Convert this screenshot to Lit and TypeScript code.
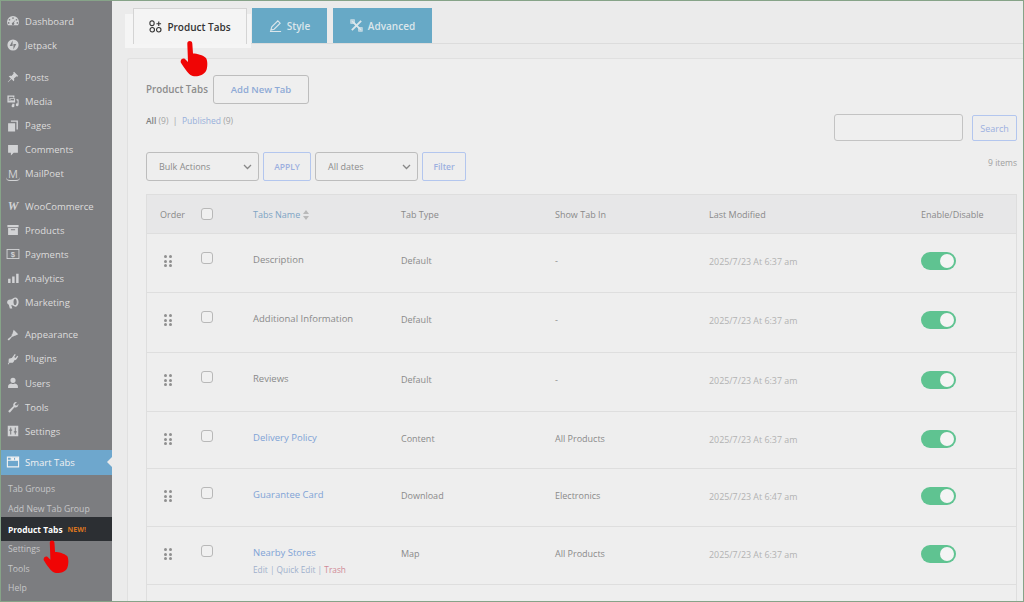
import { css, html, LitElement, svg } from "lit";
import { customElement } from "lit/decorators.js";

// dashicon-like shapes, all on a 20x20 box
const icons: Record<string, unknown> = {
  dashboard: svg`<path d="M10 3a8.500 8.500 0 0 0-8.500 8.500c0 1.700.5 3.200 1.300 4.500h14.400c.8-1.300 1.300-2.800 1.300-4.500A8.500 8.500 0 0 0 10 3zm0 1.600a1.200 1.200 0 1 1 0 2.400 1.200 1.200 0 0 1 0-2.400zM5 7a1.200 1.200 0 1 1 0 2.400A1.200 1.200 0 0 1 5 7zm10 0a1.200 1.200 0 1 1 0 2.400A1.200 1.200 0 0 1 15 7zm-1.500 1.200-2.200 4.300a1.800 1.800 0 1 1-1.500-.4zM3.800 11.500a1.200 1.200 0 1 1 0 2.400 1.200 1.200 0 0 1 0-2.400zm12.400 0a1.200 1.200 0 1 1 0 2.400 1.200 1.200 0 0 1 0-2.400z" fill-rule="evenodd"/>`,
  jetpack: svg`<path d="M10 2a8 8 0 1 0 0 16 8 8 0 0 0 0-16zM9.400 11.300H5.300l4.100-7.900zm1.200 5.300V8.700h4.100z" fill-rule="evenodd"/>`,
  posts: svg`<path d="M11.500 2.500 17.500 8.500 16 9.800 15 9l-3.600 3.200c.6 1.500.4 3-.4 4L7.800 13 3 17.500 2.500 17 7 12.200 3.800 9c1-.8 2.500-1 4-.4L11 5 10.200 4z"/>`,
  media: svg`<path d="M2 2h10v3h-2V4H4v6h1v2H2zm3 4h8v6H5zm1.500 1v3l2-1.500 1.500 1 1.500-1V7zM15 7l3 1v7.500a2 2 0 1 1-1.500-2V9.500L15 9zM9 14h3v3a2 2 0 1 1-1.500-1.900V15H9z" fill-rule="evenodd"/>`,
  pages: svg`<path d="M7 2h10v13h-2V4H7zM3 6h10v12H3z"/>`,
  comments: svg`<path d="M3 3h14v11h-6l-4 4v-4H3z"/>`,
  products: svg`<path d="M2 3h16v3H2zm1 4h14v10H3zm4 2v1.500h6V9z" fill-rule="evenodd"/>`,
  analytics: svg`<path d="M3 11h3.500v6H3zm5.800-3h3.500v9H8.800zm5.700-4H18v13h-3.500z"/>`,
  marketing: svg`<path d="M18 8.500c0-3.500-2-6.500-5-6.500-1 0-4 3-9 3.500a4 4 0 0 0-2.500 3.500A3.800 3.800 0 0 0 4 12.500L5.500 18H9l-1.500-5.200c2 .3 4 1.700 5.500 2.700 3 0 5-3.500 5-7zm-5 4.500c-1.300 0-2.300-2-2.300-4.500S11.700 4 13 4s2.300 2 2.300 4.500S14.300 13 13 13z" fill-rule="evenodd"/>`,
  appearance: svg`<path d="M11 2.500 17.500 9 13 11l-2 .5-1 1.500-1-1-4.500 5.500c-.8.6-2.500-.8-1.900-1.900L8.500 11l-1-1L9 9l.5-2z"/>`,
  plugins: svg`<path d="M12.500 3 14 4l-2.300 3.300 2 1.400L16 5.500l1.500 1-2.500 3.700c-.8 1.200-2 1.800-3.200 1.500-.4 1.300-1 2.800-2.300 3.800H5c-.5 1-1 2-1.500 2.500L2.500 17 4 14.500c-.7-1.700 0-3 0-5l4-1 .3.100z"/>`,
  users: svg`<path d="M10 2.500a3.700 3.700 0 1 1 0 7.400 3.700 3.700 0 0 1 0-7.400zM3 17v-2.500C3 12 6 10.800 7.500 10.800c1.500 1 3.500 1 5 0 1.500 0 4.500 1.200 4.500 3.700V17z"/>`,
  tools: svg`<path d="M17.500 5.500c.5 2-.2 3.600-1.500 4.600-1.200.8-2.600.9-3.900.4L6 17.500c-1 1-3.300-1-2.300-2.300l6.900-6.600c-.5-1.300-.4-2.800.5-4 1-1.400 2.700-2 4.400-1.500L12.500 6l1.300 1.900 2.300.1z"/>`,
  settings: svg`<path d="M2.500 2.500h15v15h-15zM6 5v3H4.700v1.600H6V15h1.500V9.600h1.300V8H7.500V5zm6.500 0v5.400h-1.300V12h1.300v3H14v-3h1.300v-1.600H14V5z" fill-rule="evenodd"/>`,
};

const outlineIcons: Record<string, unknown> = {
  payments: svg`<rect x="1.500" y="3.500" width="17" height="13" fill="none" stroke="currentColor" stroke-width="1.300"/><text x="10" y="14.500" font-size="11" font-weight="700" text-anchor="middle" fill="currentColor" font-family="Liberation Sans, sans-serif">$</text>`,
  smart: svg`<path d="M2 3h16v14H2zM2 7.500h16M7.500 3v4.500" fill="none" stroke="currentColor" stroke-width="1.600"/><path d="M8 3.500h3.500v4H8zm5 0h4.500v4H13z"/>`,
};

type Item = { label: string; icon: string; gap?: boolean };
const menu: Item[] = [
  { label: "Dashboard", icon: "dashboard" },
  { label: "Jetpack", icon: "jetpack" },
  { label: "Posts", icon: "posts", gap: true },
  { label: "Media", icon: "media" },
  { label: "Pages", icon: "pages" },
  { label: "Comments", icon: "comments" },
  { label: "MailPoet", icon: "mailpoet" },
  { label: "WooCommerce", icon: "woo", gap: true },
  { label: "Products", icon: "products" },
  { label: "Payments", icon: "payments" },
  { label: "Analytics", icon: "analytics" },
  { label: "Marketing", icon: "marketing" },
  { label: "Appearance", icon: "appearance", gap: true },
  { label: "Plugins", icon: "plugins" },
  { label: "Users", icon: "users" },
  { label: "Tools", icon: "tools" },
  { label: "Settings", icon: "settings" },
];

type Row = { name: string; type: string; show: string; date: string; h: number; link?: boolean; actions?: boolean };
const rows: Row[] = [
  { name: "Description", type: "Default", show: "-", date: "2025/7/23 At 6:37 am", h: 59 },
  { name: "Additional Information", type: "Default", show: "-", date: "2025/7/23 At 6:37 am", h: 60 },
  { name: "Reviews", type: "Default", show: "-", date: "2025/7/23 At 6:37 am", h: 59 },
  { name: "Delivery Policy", type: "Content", show: "All Products", date: "2025/7/23 At 6:37 am", h: 57, link: true },
  { name: "Guarantee Card", type: "Download", show: "Electronics", date: "2025/7/23 At 6:47 am", h: 58, link: true },
  { name: "Nearby Stores", type: "Map", show: "All Products", date: "2025/7/23 At 6:37 am", h: 58, link: true, actions: true },
];

const hand = (cls: string) => html`<svg class="hand ${cls}" viewBox="0 0 28 36">
  <path fill="#f00505" d="M7.300 2.500C7.500-.7 12-.7 12.300 2.500L13 12.500C17 12.500 23 14 26 17 28 20 27.500 27 26 30 23 35.500 14 36.500 10.500 34 7.500 31.500 3.500 26 .8 21.500 0 18.500 3 16.500 5 18L8 21z"/>
</svg>`;

@customElement("app-root")
export class AppRoot extends LitElement {
  static styles = css`
    :host {
      display: block;
      position: relative;
      box-sizing: border-box;
      width: 1024px;
      height: 602px;
      overflow: hidden;
      border: 1px solid #86a388;
      background: #ebebeb;
      font-family: "Open Sans", "Liberation Sans", sans-serif;
      font-size: 9.5px;
      color: #868686;
    }
    .page {
      display: flex;
      height: 100%;
    }
    .side {
      flex: none;
      width: 111px;
      background: #7c7d80;
      color: #dcdcdc;
      padding-top: 8px;
      font-size: 9.5px;
    }
    .item {
      display: flex;
      align-items: center;
      gap: 5px;
      height: 24.15px;
      padding-left: 5px;
    }
    .item.gap {
      margin-top: 8px;
    }
    .ico {
      flex: none;
      width: 14px;
      height: 14px;
      fill: #d2d3d5;
      color: #d2d3d5;
    }
    .glyph {
      flex: none;
      width: 14px;
      text-align: center;
      color: #d2d3d5;
      line-height: 13px;
    }
    .glyph.woo {
      font: italic 700 12px "Liberation Serif", serif;
    }
    .glyph.mp {
      font-size: 11px;
      border-bottom: 1px solid #d2d3d5;
      border-radius: 0 0 4px 4px;
      height: 13px;
    }
    .item.active {
      position: relative;
      margin-top: 7px;
      margin-bottom: 3px;
      background: #6ea7cd;
      color: #f2f2f2;
    }
    .item.active .ico {
      fill: #f2f2f2;
      color: #f2f2f2;
    }
    .item.active::after {
      content: "";
      position: absolute;
      right: 0;
      top: 7px;
      border: 5px solid transparent;
      border-right-color: #ebebeb;
      border-left-width: 0;
    }
    .sub {
      box-sizing: border-box;
      display: flex;
      align-items: center;
      gap: 5px;
      height: 19.9px;
      padding-left: 7px;
      font-size: 8.7px;
      color: #c6c6c8;
    }
    .sub.before {
      padding-top: 4px;
    }
    .sub.after {
      height: 19.6px;
      padding-bottom: 4px;
    }
    .sub.current {
      height: 24px;
      background: #2c2f33;
      color: #fff;
      font-size: 8.4px;
      font-weight: 700;
    }
    .new {
      font-size: 7px;
      color: #d9741f;
    }
    .main {
      flex: 1;
      min-width: 0;
      padding: 7px 0 0 15px;
    }
    .tabs {
      position: relative;
      display: flex;
      gap: 6px;
      height: 35px;
      padding-left: 6px;
      border-bottom: 1px solid #dcdcdc;
      font-size: 10px;
      font-weight: 600;
    }
    .tab {
      display: flex;
      align-items: center;
      justify-content: center;
      gap: 5px;
      background: #67a9c6;
      color: #dbe6eb;
    }
    .tab svg {
      width: 13px;
      height: 13px;
      fill: none;
      stroke: currentColor;
      stroke-width: 1.200;
    }
    .tab.on {
      position: relative;
      z-index: 1;
      width: 114px;
      height: 36px;
      margin-right: -1px;
      box-sizing: border-box;
      background: #f4f4f4;
      color: #333;
      border: 1px solid #d4d4d4;
      border-bottom: none;
      box-shadow: -9px 5px 0 -1px #f5f5f5, 5px 5px 0 -1px #f5f5f5;
    }
    .tab.style {
      width: 75px;
    }
    .tab.adv {
      width: 99px;
    }
    .card {
      box-sizing: border-box;
      margin: 14px 0 0 0;
      padding: 16px 6px 0 18px;
      height: 560px;
      background: #eeeeee;
      border: 1px solid #e0e0e0;
      border-right: none;
      border-radius: 3px 0 0 0;
    }
    .head {
      display: flex;
      align-items: center;
      gap: 5px;
      font-size: 9.800px;
      font-weight: 600;
      color: #8c8c8c;
    }
    .head button {
      width: 96px;
      height: 29px;
      font-size: 9.500px;
      font-weight: 600;
      color: #8eaad6;
      background: #efefef;
      border: 1px solid #bdbdbd;
      border-radius: 3px;
      font-family: inherit;
    }
    .filters-top {
      display: flex;
      justify-content: space-between;
      height: 34px;
      margin-top: 11px;
      font-size: 8.500px;
      color: #a3a3a3;
    }
    .counts b {
      font-weight: 600;
      color: #7e7e7e;
    }
    .counts a {
      color: #97aedb;
    }
    .search {
      display: flex;
      gap: 9px;
      margin-top: -1px;
    }
    .search i {
      display: block;
      box-sizing: border-box;
      width: 129px;
      height: 27px;
      border: 1px solid #c3c3c3;
      border-radius: 3px;
      background: #efefef;
    }
    .ghost {
      box-sizing: border-box;
      display: flex;
      align-items: center;
      justify-content: center;
      height: 26px;
      border: 1px solid #b3c6ee;
      border-radius: 2px;
      font-size: 8.500px;
      font-weight: 600;
      color: #9cb0e0;
    }
    .search .ghost {
      width: 45px;
      margin-top: 1px;
      font-size: 9px;
      font-weight: 400;
    }
    .bulk {
      display: flex;
      align-items: flex-start;
      gap: 4px;
      height: 42px;
      margin-top: 3px;
    }
    .bulk .ghost {
      height: 29px;
    }
    .select {
      box-sizing: border-box;
      display: flex;
      align-items: center;
      justify-content: space-between;
      height: 29px;
      padding: 0 6px 0 12px;
      border: 1px solid #bdbdbd;
      border-radius: 3px;
      font-size: 9px;
      font-weight: 500;
      color: #8c8c8c;
    }
    .select svg {
      width: 9px;
      height: 6px;
      fill: none;
      stroke: #888;
      stroke-width: 1.300;
    }
    .total {
      margin: 0 0 0 auto;
      padding-top: 5px;
      font-size: 8.500px;
      color: #a0a0a0;
    }
    .table {
      border: 1px solid #dedede;
      border-bottom: none;
    }
    .row {
      display: grid;
      grid-template-columns: 40px 52px 148px 154px 154px 212px 1fr;
      box-sizing: border-box;
      border-top: 1px solid #dedede;
      font-size: 9px;
      font-weight: 500;
      color: #8a8a8a;
    }
    .row.th {
      height: 38px;
      border-top: none;
      background: #e7e7e8;
      align-items: center;
      font-weight: 400;
    }
    .row > div {
      padding-left: 14px;
    }
    .row > div:first-child {
      padding-left: 13px;
    }
    .row:not(.th) > div {
      padding-top: 21px;
      line-height: 12px;
    }
    .box {
      display: block;
      box-sizing: border-box;
      width: 12px;
      height: 12px;
      border: 1px solid #b8b8b8;
      border-radius: 3px;
      background: #f0f0f0;
    }
    .th .box {
      margin-top: -1px;
    }
    .row:not(.th) .chk {
      padding-top: 18px;
    }
    .sort {
      color: #7ea4c4;
    }
    .sort svg {
      width: 6px;
      height: 10px;
      margin-left: 3px;
      vertical-align: -2px;
      fill: #b9b9b9;
    }
    .drag {
      display: grid;
      grid-template-columns: 3px 3px;
      gap: 1.500px 2px;
      width: 8px;
      margin: 0 0 0 4px;
    }
    .drag span {
      width: 3px;
      height: 3px;
      border-radius: 50%;
      background: #8f8f8f;
    }
    .name {
      font-size: 9.500px;
      margin-top: -1px;
    }
    .name.link {
      color: #7fa3d6;
    }
    .actions {
      margin-top: 5px;
      font-size: 8.300px;
      font-weight: 400;
      color: #9fb0cc;
    }
    .actions .bad {
      color: #d08a96;
    }
    .row:not(.th) .date {
      padding-top: 22px;
      font-weight: 400;
      color: #b2b2b2;
      font-size: 8.900px;
    }
    .toggle {
      position: relative;
      display: block;
      width: 35px;
      height: 18px;
      margin-top: -3px;
      border-radius: 9px;
      background: #5fc391;
    }
    .toggle::after {
      content: "";
      position: absolute;
      right: 2px;
      top: 2px;
      width: 14px;
      height: 14px;
      border-radius: 50%;
      background: #f4f4f4;
    }
    .hand {
      position: absolute;
      z-index: 5;
    }
    .hand.top {
      left: 179px;
      top: 40px;
      width: 28px;
      height: 36px;
    }
    .hand.low {
      left: 42px;
      top: 539px;
      width: 26px;
      height: 34px;
    }
  `;

  private icon(name: string) {
    if (name === "woo") return html`<span class="glyph woo">W</span>`;
    if (name === "mailpoet") return html`<span class="glyph mp">M</span>`;
    return html`<svg class="ico" viewBox="0 0 20 20">${icons[name] ?? outlineIcons[name]}</svg>`;
  }

  private tableRow(r: Row) {
    return html`
      <div class="row" style="height:${r.h}px">
        <div><span class="drag">${Array.from({ length: 6 }, () => html`<span></span>`)}</span></div>
        <div class="chk"><span class="box"></span></div>
        <div>
          <div class="name ${r.link ? "link" : ""}">${r.name}</div>
          ${r.actions
            ? html`<div class="actions">Edit | Quick Edit | <span class="bad">Trash</span></div>`
            : ""}
        </div>
        <div>${r.type}</div>
        <div>${r.show}</div>
        <div class="date">${r.date}</div>
        <div><span class="toggle"></span></div>
      </div>
    `;
  }

  render() {
    const chevron = html`<svg viewBox="0 0 9 6"><path d="M1 1l3.500 3.500L8 1" /></svg>`;
    return html`
      <div class="page">
        <nav class="side">
          ${menu.map(
            (m) => html`<div class="item ${m.gap ? "gap" : ""}">${this.icon(m.icon)}<span>${m.label}</span></div>`
          )}
          <div class="item active">
            <svg class="ico" viewBox="0 0 20 20">${outlineIcons.smart}</svg><span>Smart Tabs</span>
          </div>
          <div class="sub before">Tab Groups</div>
          <div class="sub before">Add New Tab Group</div>
          <div class="sub current">Product Tabs <span class="new">NEW!</span></div>
          <div class="sub after">Settings</div>
          <div class="sub after">Tools</div>
          <div class="sub after">Help</div>
        </nav>
        <main class="main">
          <div class="tabs">
            <div class="tab on">
              <svg viewBox="0 0 14 14">
                <rect x="1" y="1" width="4.500" height="5" rx="2" />
                <circle cx="3.500" cy="10.500" r="2.400" />
                <circle cx="10.500" cy="10.500" r="2.400" />
                <path d="M10.500 1.500v5M8 4h5" />
              </svg>
              Product Tabs
            </div>
            <div class="tab style">
              <svg viewBox="0 0 14 14"><path d="M2 12l1-3.500L9.500 2 12 4.500 5.500 11zM1 13.500h12" /></svg>
              Style
            </div>
            <div class="tab adv">
              <svg viewBox="0 0 14 14">
                <path d="M2 2l10 10M12 2L2 12" stroke-width="2" />
                <rect x="1" y="1" width="3.500" height="3.500" />
                <rect x="9.500" y="9.500" width="3.500" height="3.500" />
              </svg>
              Advanced
            </div>
          </div>
          <section class="card">
            <div class="head">Product Tabs <button>Add New Tab</button></div>
            <div class="filters-top">
              <div class="counts"><b>All</b> (9) &nbsp;|&nbsp; <a>Published</a> (9)</div>
              <div class="search">
                <i></i>
                <div class="ghost">Search</div>
              </div>
            </div>
            <div class="bulk">
              <div class="select" style="width:113px">Bulk Actions ${chevron}</div>
              <div class="ghost" style="width:48px">APPLY</div>
              <div class="select" style="width:103px">All dates ${chevron}</div>
              <div class="ghost" style="width:44px">Filter</div>
              <div class="total">9 items</div>
            </div>
            <div class="table">
              <div class="row th">
                <div>Order</div>
                <div><span class="box"></span></div>
                <div class="sort">
                  Tabs Name<svg viewBox="0 0 6 10"><path d="M3 0l3 4H0zM3 10L0 6h6z" /></svg>
                </div>
                <div>Tab Type</div>
                <div>Show Tab In</div>
                <div>Last Modified</div>
                <div>Enable/Disable</div>
              </div>
              ${rows.map((r) => this.tableRow(r))}
              <div class="row" style="height:30px"></div>
            </div>
          </section>
        </main>
      </div>
      ${hand("top")} ${hand("low")}
    `;
  }
}

declare global {
  interface HTMLElementTagNameMap {
    "app-root": AppRoot;
  }
}
